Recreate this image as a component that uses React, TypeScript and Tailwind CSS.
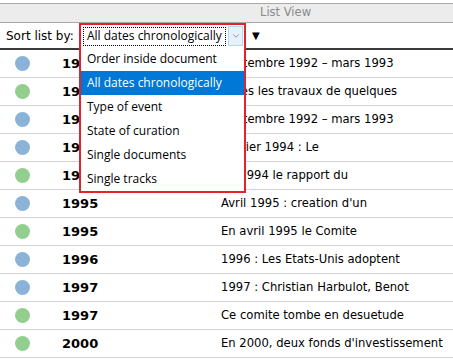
import { ChevronDown } from 'lucide-react'

type Row = { color: 'blue' | 'green'; year: string; text: string }

const rows: Row[] = [
	{ color: 'blue', year: '1992', text: 'Septembre 1992 – mars 1993' },
	{ color: 'green', year: '1993', text: 'Apres les travaux de quelques' },
	{ color: 'blue', year: '1993', text: 'Septembre 1992 – mars 1993' },
	{ color: 'blue', year: '1994', text: 'Fevrier 1994 : Le' },
	{ color: 'green', year: '1994', text: 'En 1994 le rapport du' },
	{ color: 'blue', year: '1995', text: "Avril 1995 : creation d'un" },
	{ color: 'green', year: '1995', text: 'En avril 1995 le Comite' },
	{ color: 'blue', year: '1996', text: '1996 : Les Etats-Unis adoptent' },
	{ color: 'blue', year: '1997', text: '1997 : Christian Harbulot, Benot' },
	{ color: 'green', year: '1997', text: 'Ce comite tombe en desuetude' },
	{ color: 'green', year: '2000', text: "En 2000, deux fonds d'investissement" },
]

const options = [
	'Order inside document',
	'All dates chronologically',
	'Type of event',
	'State of curation',
	'Single documents',
	'Single tracks',
]

const SortSelect = () => {
	return (
		<div className="relative w-[167px] h-full shrink-0">
			{/* highlighted open select with its list */}
			<div className="absolute left-0 top-0 z-10 w-[167px] h-[170px] border-2 border-[#e3222b] bg-white flex flex-col">
				<div className="h-[22px] flex items-center pl-[2px] pr-[1px] font-['Open_Sans',sans-serif] text-[12px] text-black">
					<div className="w-[143px] h-[19px] border border-dotted border-black flex items-center pl-[3px] leading-none">
						All dates chronologically
					</div>
					<div className="ml-[2px] w-[15px] h-[20px] bg-[#e5f1fb] border border-[#b9d6f0] flex items-center justify-center">
						<ChevronDown className="size-[10px] text-[#5a5a5a]" strokeWidth={1.5} />
					</div>
				</div>
				<div className="flex flex-col font-['Open_Sans',sans-serif] text-[12px]">
					{options.map((o, i) => (
						<div
							key={o}
							className={
								i === 1
									? 'h-[24px] flex items-center pl-[6px] bg-[#0078d7] text-white'
									: 'h-[24px] flex items-center pl-[6px] text-black'
							}
						>
							{o}
						</div>
					))}
				</div>
			</div>
		</div>
	)
}

export default function App() {
	return (
		<div className="w-[453px] h-[361px] overflow-hidden bg-white font-['DejaVu_Sans',sans-serif] text-black">
			<div className="h-[3px]" />
			<div className="h-[20px] border-y border-[#a9a9a9] bg-[#ececec] flex items-center pl-[260px] text-[11.5px] text-[#8a8a8a]">
				List View
			</div>
			<div className="h-[25px] flex items-center pl-[6px] text-[12px]">
				<span className="w-[73px] shrink-0">Sort list by:</span>
				<SortSelect />
				<span className="ml-[6px] text-[10px]">▼</span>
			</div>
			<div className="h-[2px] bg-[#3a3a3a]" />
			<div className="flex flex-col">
				{rows.map((r, i) => (
					<div key={i} className="h-[28px] shrink-0 border-b border-[#d3d3d3] flex items-center">
						<div
							className={
								r.color === 'blue'
									? 'ml-[15px] w-[15px] h-[15px] rounded-full bg-[#8bb3d8]'
									: 'ml-[15px] w-[15px] h-[15px] rounded-full bg-[#92cf8f]'
							}
						/>
						<div className="ml-[32px] w-[159px] font-bold text-[13px]">{r.year}</div>
						<div className="text-[11.6px] whitespace-nowrap">{r.text}</div>
					</div>
				))}
			</div>
		</div>
	)
}
